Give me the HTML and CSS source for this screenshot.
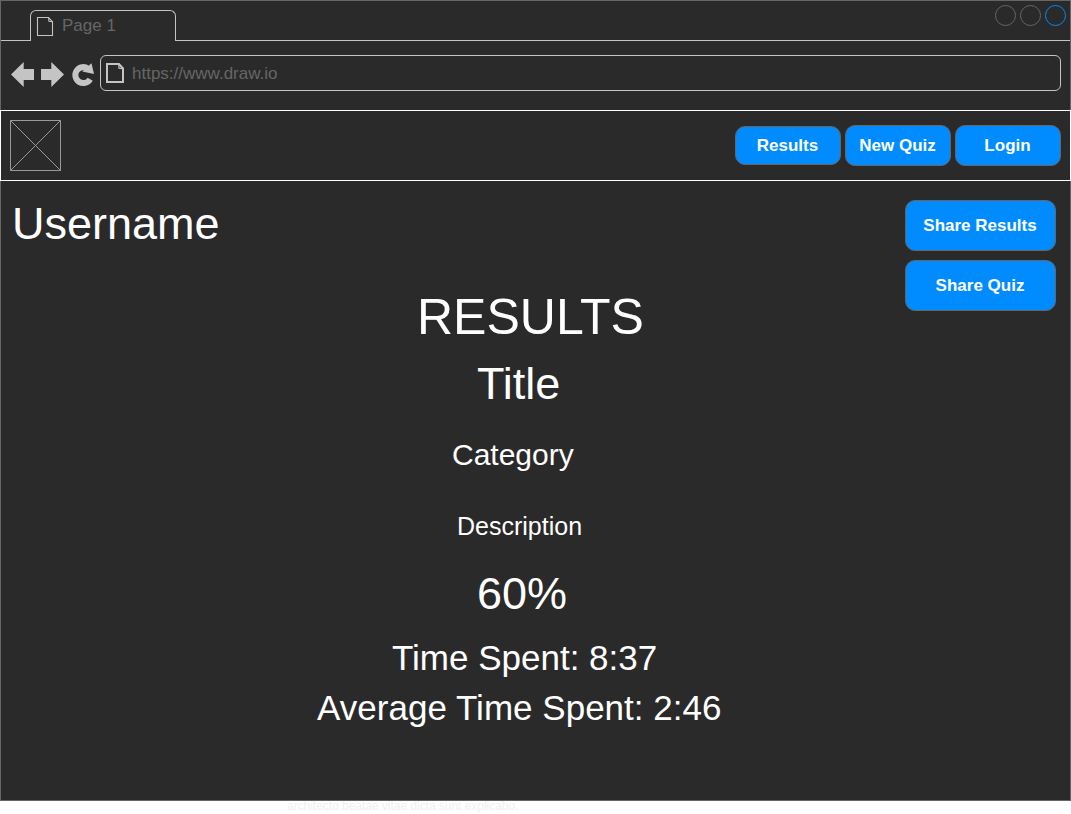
FILE: index.html
```html
<!DOCTYPE html>
<html lang="en">
<head>
<meta charset="utf-8">
<title>Quiz results</title>
<link rel="stylesheet" href="styles.css">
</head>
<body>
<div class="window">
  <div class="tab-strip">
    <div class="strip-start"></div>
    <div class="tab">
      <svg class="tab-icon" width="18" height="21" viewBox="0 0 18 21"><path d="M1.5 1.5H12.5L16.5 5.8V19.5H1.5ZM12.5 1.5L13 5.2L16.5 5.8" fill="none" stroke="#c4c4c4" stroke-width="1.1"/></svg>
      <span>Page 1</span>
    </div>
    <div class="strip-end">
      <i class="control"></i><i class="control"></i><i class="control control-active"></i>
    </div>
  </div>
  <div class="toolbar">
    <svg class="nav-icons" width="99" height="69" viewBox="1 41 99 69">
      <path fill="#c4c4c4" d="M11 74.5L23.7 62V69H34V80H23.7V87ZM64 74.5L51.3 62V69H41V80H51.3V87Z"/>
      <path fill="none" stroke="#c4c4c4" stroke-width="6" d="M90.2 79.2A8 8 0 1 1 88 68.6"/>
      <path fill="#c4c4c4" d="M91.5 63.3L94 74L82.2 71.6Z"/>
    </svg>
    <div class="address">
      <svg class="address-icon" width="20" height="23" viewBox="0 0 20 23"><path d="M2 2H14L18 6.5V20H2Z" fill="none" stroke="#c4c4c4" stroke-width="2"/><path d="M13.7 2L14 6.2L18 6.7" fill="none" stroke="#c4c4c4" stroke-width="1.2"/></svg>
      <span>https://www.draw.io</span>
    </div>
  </div>
  <nav class="site-nav">
    <svg class="logo" width="51" height="51" viewBox="0 0 51 51"><path d="M.5.5H50.5V50.5H.5ZL50.5 50.5M50.5.5L.5 50.5" fill="none" stroke="#999"/></svg>
    <div class="nav-buttons">
      <button class="button button-short">Results</button>
      <button class="button">New Quiz</button>
      <button class="button">Login</button>
    </div>
  </nav>
  <main class="content">
    <div class="report">
      <div class="username">Username</div>
      <h1 class="heading">RESULTS</h1>
      <h2 class="title">Title</h2>
      <div class="category">Category</div>
      <div class="description">Description</div>
      <div class="score">60%</div>
      <div class="time">Time Spent: 8:37</div>
      <div class="average">Average Time Spent: 2:46</div>
    </div>
    <div class="share">
      <button class="button button-share">Share Results</button>
      <button class="button button-share">Share Quiz</button>
    </div>
  </main>
</div>
<div class="footnote">architecto beatae vitae dicta sunt explicabo.</div>
</body>
</html>
```
FILE: styles.css
```css
* { box-sizing: border-box; }
body {
  margin: 0;
  height: 814px;
  overflow: hidden;
  background: #fff;
  font-family: "Liberation Sans", Arial, sans-serif;
}
.window {
  width: 1071px;
  height: 801px;
  border: 1px solid #666;
  background: #2a2a2a;
  color: #fff;
}
svg { display: block; flex: none; }

.tab-strip { display: flex; height: 40px; color: #666; font-size: 17px; }
.strip-start { width: 29px; border-bottom: 1px solid #c4c4c4; }
.tab {
  display: flex;
  width: 146px;
  height: 31px;
  margin-top: 9px;
  padding-left: 5px;
  border: 1px solid #c4c4c4;
  border-bottom: 0;
  border-radius: 6px 6px 0 0;
  line-height: 29px;
}
.tab-icon { margin-top: 5px; margin-right: 8px; }
.strip-end {
  display: flex;
  flex: 1;
  justify-content: flex-end;
  gap: 4px;
  padding: 4px 4px 0 0;
  border-bottom: 1px solid #c4c4c4;
}
.control { width: 21px; height: 21px; border: 1px solid #666; border-radius: 50%; }
.control-active { border-color: #008cff; }

.toolbar { display: flex; height: 69px; }
.address {
  display: flex;
  width: 961px;
  height: 36px;
  margin-top: 14px;
  padding-left: 4px;
  border: 1px solid #c4c4c4;
  border-radius: 6px;
  color: #666;
  font-size: 17px;
  line-height: 35px;
}
.address-icon { margin-top: 6px; margin-right: 7px; }

.site-nav {
  display: flex;
  justify-content: space-between;
  align-items: center;
  height: 71px;
  margin: 0 -1px;
  padding: 0 9px;
  border: 1px solid #fff;
}
.nav-buttons { display: flex; align-items: center; gap: 4px; }
.button {
  width: 106px;
  height: 41px;
  padding: 0 1px 0 0;
  border: 1px solid #666;
  border-radius: 10px;
  background: #008cff;
  color: #fff;
  font: bold 17px "Liberation Sans", Arial, sans-serif;
}
.button-short { height: 39px; }

.content { display: flex; justify-content: space-between; padding: 19px 14px 0 11px; }
.report > * { margin: 0; font-weight: normal; white-space: nowrap; }
.username { font-size: 45px; line-height: 48px; }
.report .heading { margin: 39px 0 0 405px; font-size: 50px; line-height: 60px; }
.report .title { margin: 10px 0 0 465px; font-size: 45px; line-height: 54px; }
.report .category { margin: 26px 0 0 440px; font-size: 30px; line-height: 36px; }
.report .description { margin: 38px 0 0 445px; font-size: 25px; line-height: 30px; }
.report .score { margin: 26px 0 0 465px; font-size: 45px; line-height: 54px; }
.report .time { margin: 16px 0 0 380px; font-size: 35px; line-height: 42px; }
.report .average { margin: 8px 0 0 305px; font-size: 35px; line-height: 42px; letter-spacing: 0.02px; }
.share { display: flex; flex-direction: column; gap: 9px; }
.button-share { width: 151px; height: 51px; }

.footnote { margin-left: 287px; color: #f0f0f0; font-size: 12px; line-height: 14px; margin-top: -2px; letter-spacing: -0.03px; }
```
